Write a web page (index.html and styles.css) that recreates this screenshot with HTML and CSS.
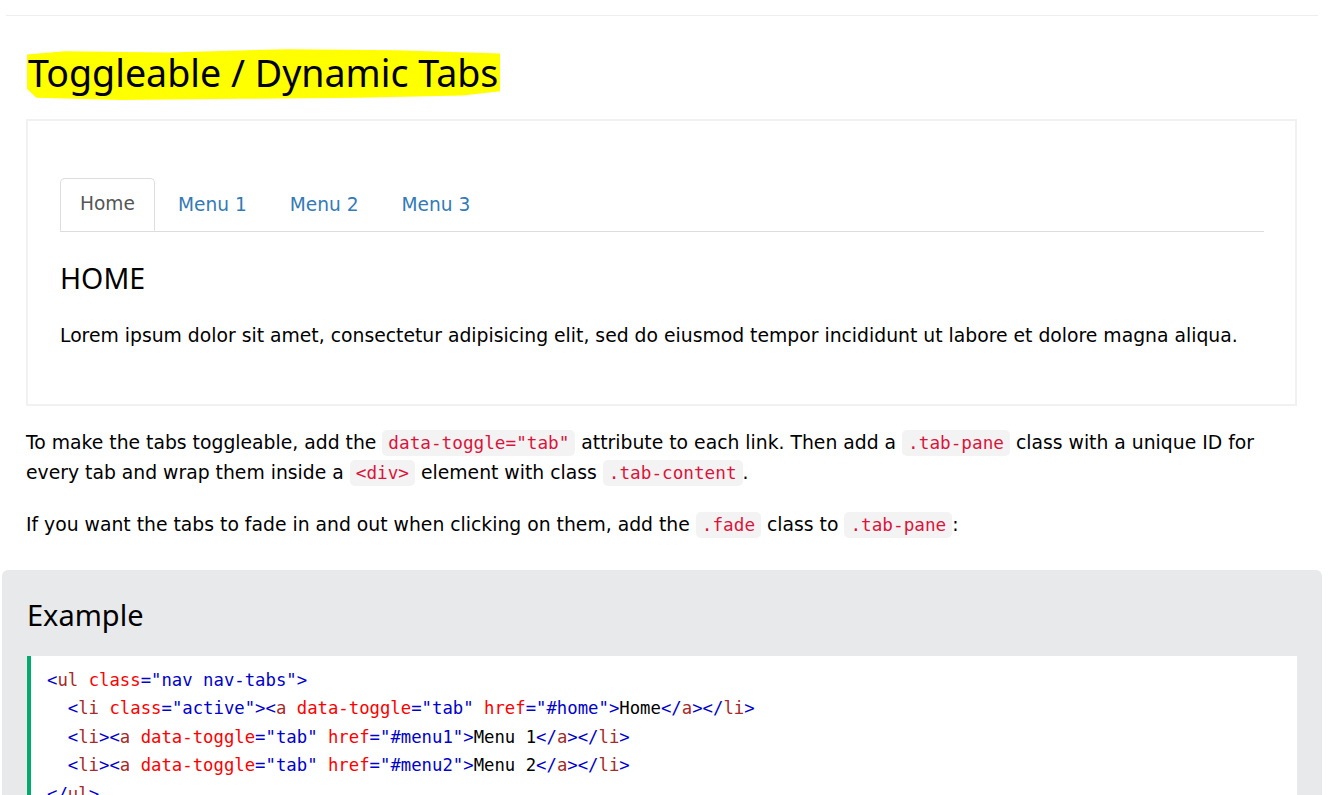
FILE: index.html
```html
<!DOCTYPE html>
<html>
<head>
<meta charset="utf-8">
<link rel="stylesheet" href="styles.css">
</head>
<body>
<hr class="top-rule">
<main class="main">
  <h2 class="title"><span class="mark">Toggleable / Dynamic Tabs</span></h2>

  <div class="demo">
    <ul class="tabs">
      <li class="tab active">Home</li>
      <li class="tab">Menu 1</li>
      <li class="tab">Menu 2</li>
      <li class="tab">Menu 3</li>
    </ul>
    <h3 class="pane-title">HOME</h3>
    <p class="pane-text">Lorem ipsum dolor sit amet, consectetur adipisicing elit, sed do eiusmod tempor incididunt ut labore et dolore magna aliqua.</p>
  </div>

  <p class="text">To make the tabs toggleable, add the <code class="ic">data-toggle="tab"</code> attribute to each link. Then add a <code class="ic">.tab-pane</code> class with a unique ID for every tab and wrap them inside a <code class="ic">&lt;div&gt;</code> element with class <code class="ic">.tab-content</code>.</p>
  <p class="text">If you want the tabs to fade in and out when clicking on them, add the <code class="ic">.fade</code> class to <code class="ic">.tab-pane</code>:</p>

  <section class="example">
    <h3 class="ex-title">Example</h3>
    <div class="code"><div class="ln"><span class="d">&lt;</span><span class="t">ul</span> <span class="a">class</span><span class="d">=</span><span class="v">"nav nav-tabs"</span><span class="d">&gt;</span></div><div class="ln">&nbsp;&nbsp;<span class="d">&lt;</span><span class="t">li</span> <span class="a">class</span><span class="d">=</span><span class="v">"active"</span><span class="d">&gt;&lt;</span><span class="t">a</span> <span class="a">data-toggle</span><span class="d">=</span><span class="v">"tab"</span> <span class="a">href</span><span class="d">=</span><span class="v">"#home"</span><span class="d">&gt;</span>Home<span class="d">&lt;/</span><span class="t">a</span><span class="d">&gt;&lt;/</span><span class="t">li</span><span class="d">&gt;</span></div><div class="ln">&nbsp;&nbsp;<span class="d">&lt;</span><span class="t">li</span><span class="d">&gt;&lt;</span><span class="t">a</span> <span class="a">data-toggle</span><span class="d">=</span><span class="v">"tab"</span> <span class="a">href</span><span class="d">=</span><span class="v">"#menu1"</span><span class="d">&gt;</span>Menu 1<span class="d">&lt;/</span><span class="t">a</span><span class="d">&gt;&lt;/</span><span class="t">li</span><span class="d">&gt;</span></div><div class="ln">&nbsp;&nbsp;<span class="d">&lt;</span><span class="t">li</span><span class="d">&gt;&lt;</span><span class="t">a</span> <span class="a">data-toggle</span><span class="d">=</span><span class="v">"tab"</span> <span class="a">href</span><span class="d">=</span><span class="v">"#menu2"</span><span class="d">&gt;</span>Menu 2<span class="d">&lt;/</span><span class="t">a</span><span class="d">&gt;&lt;/</span><span class="t">li</span><span class="d">&gt;</span></div><div class="ln"><span class="d">&lt;/</span><span class="t">ul</span><span class="d">&gt;</span></div></div>
  </section>
</main>
</body>
</html>
```
FILE: styles.css
```css
html, body {
  margin: 0;
  padding: 0;
  background: #fff;
  overflow: hidden;
  height: 795px;
}
body {
  font-family: "DejaVu Sans", Verdana, sans-serif;
  font-size: 18.8px;
  color: #000;
}
.top-rule {
  margin: 15px 17px 0 6px;
  border: 0;
  border-top: 1px solid #eeeeee;
  height: 0;
}
.main {
  padding: 0 38px 0 26px;
}
.title {
  font-family: "Noto Sans", "Open Sans", sans-serif;
  font-weight: 400;
  font-size: 37.6px;
  margin: 31px 0 0 0;
  height: 68px;
  line-height: 50px;
}
.mark {
  display: inline-block;
  background: #ffff00;
  padding: 1px 2px 3px 1px;
  margin-left: 1px;
  clip-path: polygon(0 14%, 8% 8%, 30% 10%, 55% 4%, 78% 6%, 100% 12%, 100% 82%, 92% 90%, 70% 94%, 45% 96%, 20% 98%, 2% 94%, 0 78%);
}
.demo {
  border: 2px solid #f1f1f1;
  padding: 57px 31px 53px 32px;
  margin-top: 4px;
}
.tabs {
  list-style: none;
  margin: 0;
  padding: 0;
  display: flex;
  border-bottom: 1px solid #dddddd;
  height: 53px;
}
.tab {
  padding: 0 19px;
  margin-right: 3px;
  line-height: 51px;
  color: #337ab7;
  border: 1px solid transparent;
  border-radius: 5px 5px 0 0;
  font-size: 18.6px;
}
.tab.active {
  color: #555555;
  border-color: #dddddd;
  border-bottom-color: #fff;
  background: #fff;
  height: 53px;
  box-sizing: border-box;
  line-height: 50px;
}
.pane-title {
  font-family: "Noto Sans", "Open Sans", sans-serif;
  font-weight: 400;
  font-size: 28.5px;
  margin: 26px 0 0 0;
  line-height: 40px;
}
.pane-text {
  margin: 23px 0 0 0;
  line-height: 30px;
}
.text {
  margin: 22px 0 0 0;
  line-height: 29px;
}
.text + .text {
  margin-top: 22px;
}
.ic {
  font-family: "DejaVu Sans Mono", "Liberation Mono", monospace;
  font-size: 17.7px;
  color: #dc143c;
  background: #f3f3f3;
  padding: 3px 6px;
  border-radius: 5px;
}
.example {
  background: #e7e9eb;
  margin: 30px -25px 0 -24px;
  padding: 17px 25px 20px 25px;
  border-radius: 6px;
}
.ex-title {
  font-family: "Noto Sans", "Open Sans", sans-serif;
  font-weight: 400;
  font-size: 29px;
  margin: 0;
  line-height: 56px;
  height: 69px;
}
.code {
  background: #fff;
  border-left: 4px solid #04aa6d;
  padding: 10px 16px 20px 16px;
  font-family: "DejaVu Sans Mono", "Liberation Mono", monospace;
  font-size: 17.3px;
  line-height: 28.4px;
  white-space: nowrap;
  color: #000;
}
.d { color: mediumblue; }
.t { color: brown; }
.a { color: red; }
.v { color: mediumblue; }
```
